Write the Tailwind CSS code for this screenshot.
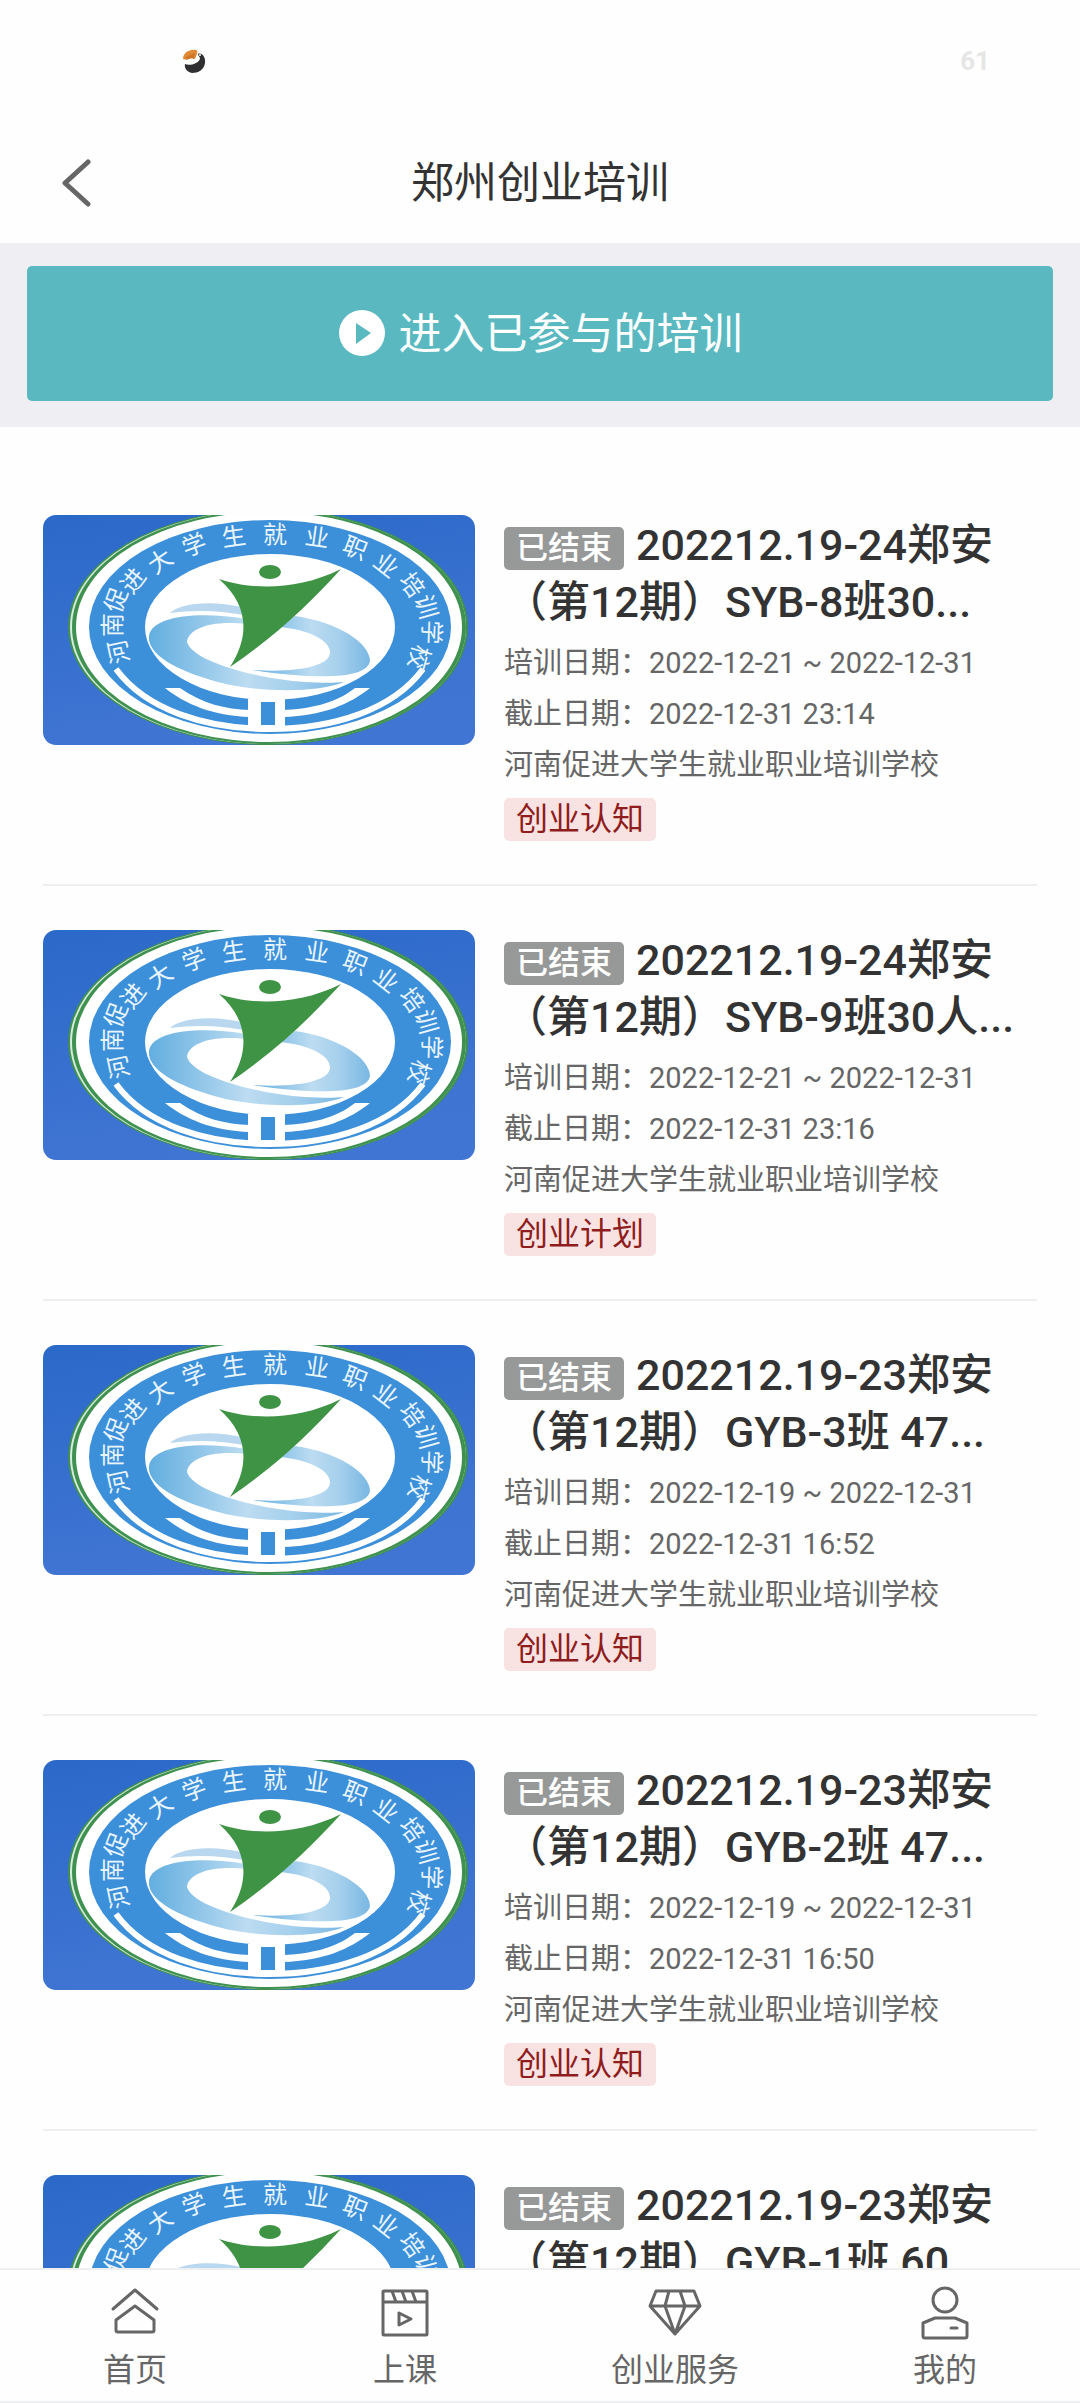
<!DOCTYPE html>
<html lang="zh-CN">
<head>
  <meta charset="UTF-8">
  <meta name="viewport" content="width=device-width, initial-scale=1.0">
  <title>郑州创业培训</title>
  <script src="https://cdn.jsdelivr.net/npm/@tailwindcss/browser@4"></script>
</head>
<body class="h-screen flex flex-col overflow-hidden bg-[#fefefe] text-[#333] font-[Roboto,'Noto_Sans_CJK_SC',sans-serif]">

  <!-- School badge, shared by every course cover -->
  <svg class="absolute w-0 h-0" aria-hidden="true">
    <defs>
      <linearGradient id="cover-bg" x1="0" y1="0" x2="0.3" y2="1">
        <stop offset="0" stop-color="#2b69c9"/>
        <stop offset="1" stop-color="#4175d3"/>
      </linearGradient>
      <linearGradient id="swoosh" x1="0" y1="0" x2="1" y2="0">
        <stop offset="0" stop-color="#62aee0"/>
        <stop offset="0.5" stop-color="#bcdcf1"/>
        <stop offset="0.75" stop-color="#a4cfec"/>
        <stop offset="1" stop-color="#79b7e2"/>
      </linearGradient>
      <symbol id="cover" viewBox="0 0 432 230" preserveAspectRatio="none">
        <rect width="432" height="230" fill="url(#cover-bg)"/>
        <ellipse cx="225" cy="112" rx="200" ry="118" fill="#3f9150"/>
        <ellipse cx="225" cy="112" rx="198" ry="117" fill="#d8ebe0"/>
        <ellipse cx="226" cy="112" rx="197" ry="117" fill="#3f9150"/>
        <ellipse cx="226" cy="112" rx="193" ry="115" fill="#fff"/>
        <ellipse cx="227" cy="112" rx="181" ry="107" fill="#3c8fd9"/>
        <ellipse cx="227" cy="112" rx="125" ry="73" fill="#fff"/>
        <path d="M127 98C138 87 172 85 203 93L205 101C178 95 150 95 127 98Z" fill="#b9d7ee"/>
        <path d="M106 121C109 101 155 96 203 104L203 109C165 105 145 115 144 127C150 147 215 164 262 167C278 168 292 168 301 167C275 178 215 178 175 167C130 155 104 138 106 121Z" fill="url(#swoosh)"/>
        <path d="M252 101C295 107 327 128 327 146C324 164 275 165 210 155C255 158 288 151 287 137C286 124 264 115 238 112Z" fill="url(#swoosh)"/>
        <ellipse cx="227" cy="57" rx="11" ry="7" fill="#3f9345"/>
        <path d="M176 64C205 74 252 77 298 54C267 88 233 121 187 152C206 123 207 91 176 64Z" fill="#3f9345"/>
        <path d="M73 154C103 195 163 214 226 214C290 214 350 195 380 154" fill="none" stroke="#fff" stroke-width="6"/>
        <path d="M122 173H137C160 189 182 194 207 195V202C170 201 142 189 122 173Z" fill="#fff"/>
        <path d="M327 173H312C292 189 265 194 240 195V202C280 201 307 189 327 173Z" fill="#fff"/>
        <path d="M205 184H242V214H205Z" fill="#fff"/>
        <path d="M218 187H232V210H218Z" fill="#3c8fd9"/>
        <g fill="#e9f5fd" font-size="24" text-anchor="middle">
          <text transform="translate(84 135) rotate(-102)">河</text>
          <text transform="translate(78 110) rotate(-90)">南</text>
          <text transform="translate(81 88) rotate(-70)">促</text>
          <text transform="translate(97 71) rotate(-52)">进</text>
          <text transform="translate(122 53) rotate(-35)">大</text>
          <text transform="translate(154 38) rotate(-20)">学</text>
          <text transform="translate(192 30) rotate(-8)">生</text>
          <text transform="translate(232 28)">就</text>
          <text transform="translate(273 31) rotate(8)">业</text>
          <text transform="translate(309 41) rotate(21)">职</text>
          <text transform="translate(338 57) rotate(38)">业</text>
          <text transform="translate(362 75) rotate(54)">培</text>
          <text transform="translate(375 94) rotate(74)">训</text>
          <text transform="translate(380 117) rotate(92)">学</text>
          <text transform="translate(368 140) rotate(106)">校</text>
        </g>
      </symbol>
    </defs>
  </svg>

  <header class="shrink-0">
    <div class="h-[122px] flex items-center justify-between pl-[182px] pr-[90px]">
      <svg class="w-6 h-6" viewBox="0 0 24 24" aria-hidden="true">
        <path d="M1 10C1 4 7 0 14 1C17 2 14 7 13 10C9 7 5 12 1 10Z" fill="#e08a35"/>
        <path d="M4 8L13 4L12 10C9 8 7 10 4 11Z" fill="#cf7526"/>
        <path d="M3 15C7 17 16 15 18 10C18 7 16 7 16 5C20 3 24 9 23 14C22 21 16 24 10 24C5 23 2 19 3 15Z" fill="#303032"/>
        <circle cx="18" cy="6" r="1" fill="#fff"/>
      </svg>
      <span class="text-[26px] leading-8 font-bold text-[#e6e6e6]">61</span>
    </div>
    <div class="h-[121px] grid grid-cols-[120px_1fr_120px] items-center">
      <button class="h-full flex items-center pl-[60px]" aria-label="返回">
        <svg class="w-8 h-12" viewBox="0 0 32 48" fill="none" stroke="#666" stroke-width="5" stroke-linecap="round" stroke-linejoin="round">
          <path d="M28 3L5 24L28 45"/>
        </svg>
      </button>
      <h1 class="text-[43px] leading-[56px] text-center">郑州创业培训</h1>
    </div>
  </header>

  <div class="shrink-0 bg-[#eeeef3] px-[27px] pt-[23px] pb-[26px]">
    <button class="w-full h-[135px] rounded-[5px] bg-[#5ab9c0] text-white text-[43px] leading-[56px] flex items-center justify-center gap-[13px]">
      <svg class="w-12 h-12" viewBox="0 0 48 48" aria-hidden="true">
        <circle cx="24" cy="23" r="23" fill="#fff"/>
        <path d="M18 13L33 23L18 34Z" fill="#5ab9c0"/>
      </svg>
      进入已参与的培训
    </button>
  </div>

  <main id="course-list" class="flex-1 min-h-0 overflow-y-auto [scrollbar-width:none] px-[43px] pt-11"></main>

  <nav class="shrink-0 grid grid-cols-4 bg-[#fefefe] border-y-2 border-[#eeeff0] pt-4 pb-[11px] text-[32px] leading-10 text-[#666]">
    <a href="#home" class="flex flex-col items-center gap-[10px]">
      <svg class="w-[54px] h-[54px]" viewBox="0 0 54 54" fill="none" stroke="#666" stroke-width="3" stroke-linecap="round" stroke-linejoin="round">
        <path d="M5 23L27 4L49 23M8 34L27 20L46 34V44Q46 46 44 46H10Q8 46 8 44Z"/>
      </svg>
      首页
    </a>
    <a href="#class" class="flex flex-col items-center gap-[10px]">
      <svg class="w-[54px] h-[54px]" viewBox="0 0 54 54" fill="none" stroke="#666" stroke-width="3" stroke-linejoin="round">
        <rect x="5" y="5" width="44" height="44" rx="1"/>
        <path d="M5 16H49M14 5L18 16M24 5L28 16M34 5L38 16M21 27V39L33 33Z"/>
      </svg>
      上课
    </a>
    <a href="#service" class="flex flex-col items-center gap-[10px]">
      <svg class="w-[54px] h-[54px]" viewBox="0 0 54 54" fill="none" stroke="#666" stroke-width="3" stroke-linejoin="round">
        <path d="M8 5H46L52 20L27 48L2 20ZM2 20H52M21 5L17 20L27 48L37 20L32 5"/>
      </svg>
      创业服务
    </a>
    <a href="#mine" class="flex flex-col items-center gap-[10px]">
      <svg class="w-[54px] h-[54px]" viewBox="0 0 54 54" fill="none" stroke="#666" stroke-width="3" stroke-linecap="round" stroke-linejoin="round">
        <circle cx="27" cy="14" r="12"/>
        <path d="M17 32H37L49 37V50Q49 52 47 52H7Q5 52 5 50V37ZM33 42H39"/>
      </svg>
      我的
    </a>
  </nav>

  <script>
    const courses = [
      { title: '202212.19-24郑安（第12期）SYB-8班30...', dates: '2022-12-21 ~ 2022-12-31', deadline: '2022-12-31 23:14', tag: '创业认知' },
      { title: '202212.19-24郑安（第12期）SYB-9班30人...', dates: '2022-12-21 ~ 2022-12-31', deadline: '2022-12-31 23:16', tag: '创业计划' },
      { title: '202212.19-23郑安（第12期）GYB-3班 47...', dates: '2022-12-19 ~ 2022-12-31', deadline: '2022-12-31 16:52', tag: '创业认知' },
      { title: '202212.19-23郑安（第12期）GYB-2班 47...', dates: '2022-12-19 ~ 2022-12-31', deadline: '2022-12-31 16:50', tag: '创业认知' },
      { title: '202212.19-23郑安（第12期）GYB-1班 60...' }
    ];

    const list = document.getElementById('course-list');

    list.innerHTML = courses.map(c => `
      <article class="flex items-start gap-[29px] pt-11 pb-[43px] border-b-2 border-[#efefef]">
        <svg class="w-[40vw] aspect-[432/230] shrink-0 rounded-[13px]" role="img" aria-label="课程封面"><use href="#cover"/></svg>
        <div class="flex-1 min-w-0 pt-0.5">
          <h2 class="text-[43px] leading-[57px] font-medium"><span class="inline-block align-middle mr-3 px-3 rounded-[5px] bg-[#979999] text-white text-[32px] leading-[43px]">已结束</span>${c.title}</h2>
          ${c.dates ? `
          <div class="mt-[7px] text-[29px] leading-[51px] text-[#666]">
            <p>培训日期：${c.dates}</p>
            <p>截止日期：${c.deadline}</p>
            <p>河南促进大学生就业职业培训学校</p>
          </div>
          <span class="block w-fit mt-[7px] px-3 rounded-[5px] bg-[#f9e3e2] text-[#8f1d1d] text-[32px] leading-[43px]">${c.tag}</span>` : ''}
        </div>
      </article>`).join('');
  </script>
</body>
</html>
